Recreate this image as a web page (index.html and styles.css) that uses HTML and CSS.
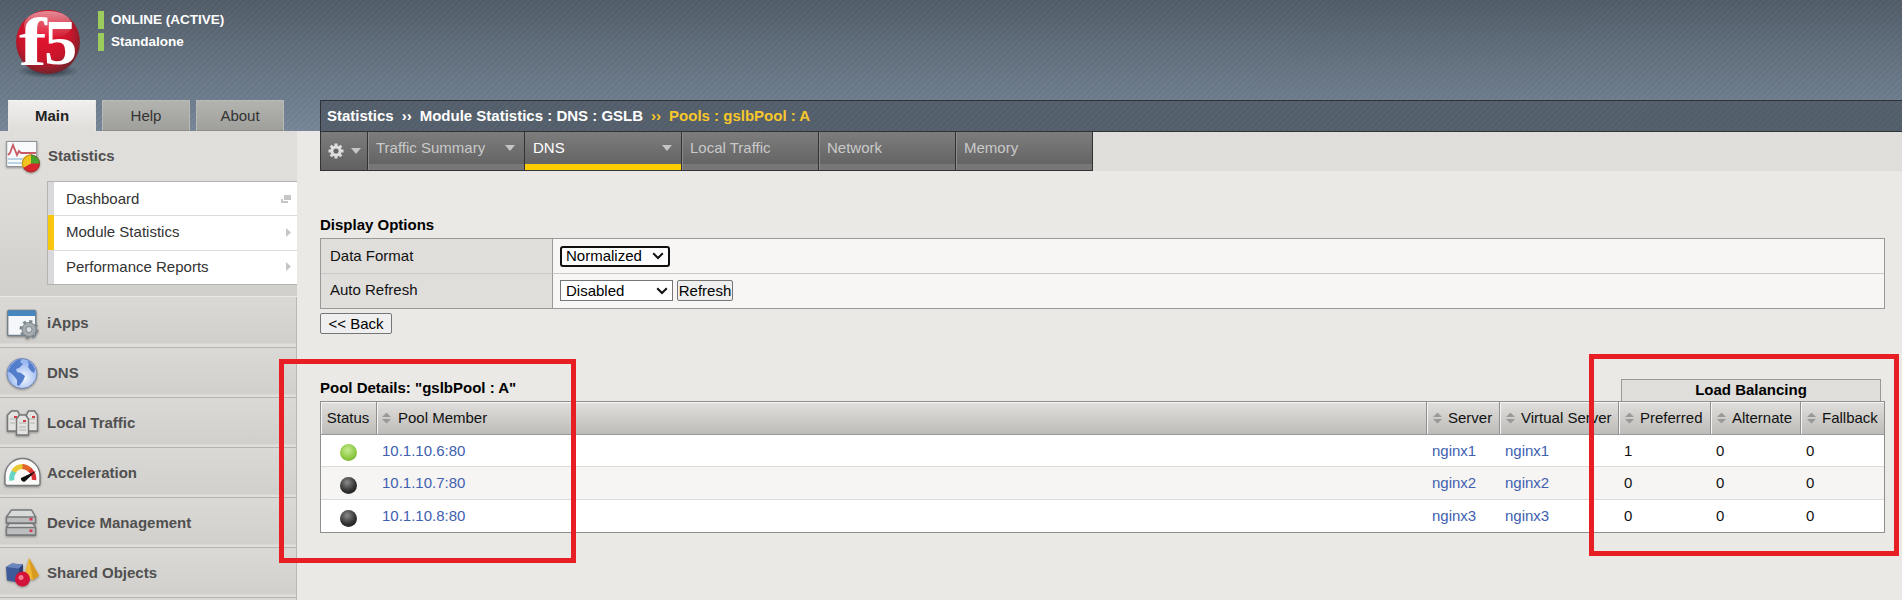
FILE: index.html
```html
<!DOCTYPE html>
<html lang="en">
<head>
<meta charset="utf-8">
<title>Module Statistics</title>
<link rel="stylesheet" href="styles.css">
</head>
<body>
<header class="banner">
  <div class="identity">
    <svg class="logo" width="72" height="72" viewBox="0 0 72 72">
      <defs>
        <radialGradient id="ball" cx=".45" cy=".38" r=".62"><stop offset="0" stop-color="#e8122f"/><stop offset=".65" stop-color="#c9152b"/><stop offset="1" stop-color="#74232b"/></radialGradient>
        <linearGradient id="gloss" x1="0" y1="0" x2="0" y2="1"><stop offset="0" stop-color="#fff" stop-opacity=".5"/><stop offset="1" stop-color="#fff" stop-opacity="0"/></linearGradient>
        <radialGradient id="shade"><stop offset="0" stop-color="#20262d" stop-opacity=".9"/><stop offset="1" stop-color="#20262d" stop-opacity="0"/></radialGradient>
      </defs>
      <ellipse cx="36" cy="61" rx="31" ry="7" fill="url(#shade)"/>
      <circle cx="36" cy="32" r="32" fill="url(#ball)"/>
      <ellipse cx="36" cy="15" rx="24" ry="14" fill="url(#gloss)"/>
      <text class="logo-text" transform="translate(7 55) scale(1.220 1)">f</text>
      <text class="logo-text" transform="translate(32 54) scale(.980 .940)">5</text>
    </svg>
    <div class="states">
      <div class="state">ONLINE (ACTIVE)</div>
      <div class="state">Standalone</div>
    </div>
  </div>
  <nav class="tabs">
    <div class="tab tab-on">Main</div>
    <div class="tab">Help</div>
    <div class="tab">About</div>
  </nav>
</header>
<div class="layout">
  <aside class="side">
    <section class="open">
      <div class="open-head">
        <svg class="ic" width="40" height="36" viewBox="0 0 40 36">
          <rect x="6.700" y="3.500" width="30" height="25" fill="#f8f9fa" stroke="#8e9296"/>
          <path d="M8 21h27M8 25h27" stroke="#b9d4e6" stroke-width="2"/>
          <path d="M8 17l2-2 3-8 4 10 2-4 2 2h15" fill="none" stroke="#c75b66" stroke-width="1.800"/>
          <circle cx="31" cy="25.500" r="9" fill="#d8262f"/>
          <path d="M31 25.500V16.500a9 9 0 0 0-8 13.500z" fill="#f3c41d"/>
          <path d="M31 25.500V16.500a9 9 0 0 1 9 9z" fill="#4aa32f"/>
          <circle cx="31" cy="25.500" r="8.500" fill="none" stroke="#5c3020" stroke-opacity=".35"/>
        </svg>
        <span>Statistics</span>
      </div>
      <ul class="sub">
        <li>Dashboard<svg width="10" height="8"><path d="M0 4h2v2h5v2H0zM3 0h7v5H3z" fill="#c6c6c6"/></svg></li>
        <li class="sub-on">Module Statistics<svg width="5" height="9"><path d="M0 0l5 4.500L0 9z" fill="#c6c6c6"/></svg></li>
        <li>Performance Reports<svg width="5" height="9"><path d="M0 0l5 4.500L0 9z" fill="#c6c6c6"/></svg></li>
      </ul>
    </section>
    <div class="item first">
      <svg class="ic" width="40" height="36" viewBox="0 0 40 36">
        <rect x="7.700" y="5.500" width="28" height="25" rx="1" fill="#f5f7fa" stroke="#747f8a" stroke-width="1.400"/>
        <rect x="8" y="5.500" width="27.500" height="5.500" fill="#4786bf"/>
        <circle cx="29" cy="24.500" r="8" fill="none" stroke="#7e888e" stroke-width="3" stroke-dasharray="3.100 3.180"/>
        <circle cx="29" cy="24.500" r="7" fill="#a4acb0" stroke="#7e888e"/>
        <circle cx="29" cy="24.500" r="3" fill="#d9dddd" stroke="#7e888e"/>
      </svg><span>iApps</span>
    </div>
    <div class="item">
      <svg class="ic" width="40" height="36" viewBox="0 0 40 36">
        <defs><radialGradient id="sea" cx=".55" cy=".65"><stop offset="0" stop-color="#f4f8ff"/><stop offset="1" stop-color="#9dbaf0"/></radialGradient></defs>
        <circle cx="22" cy="18.500" r="15" fill="url(#sea)" stroke="#7286b5"/>
        <path d="M8 16l3-6 6-5 5-1-2 3 3 2-4 4-3 1 1 3 4 1 4 3-2 5-4 5-2-1v-5l-3-4-3-3-2-1zM27 5l5 4 3 5-1 4-3-2-3-4 1-3z" fill="#537dcb"/>
      </svg><span>DNS</span>
    </div>
    <div class="item">
      <svg class="ic" width="40" height="36" viewBox="0 0 40 36">
        <g fill="#e3e3e1" stroke="#777" stroke-width="1.500">
          <path d="M7.500 26V10l4-4h6l2 4v16zM26.500 26V10l2-4h6l3 4v16z"/>
          <path d="M16.500 30V14l3-4h6l3 4v16z"/>
        </g>
        <path d="M10 14h6M10 18h5M29 14h6M30 18h5M19 18h7M19 22h7M19 25h7" stroke="#b1b1ad"/>
        <path d="M14 11h3v2h-3zM32 11h3v2h-3zM23 15h3v2h-3z" fill="#d63c45"/>
      </svg><span>Local Traffic</span>
    </div>
    <div class="item">
      <svg class="ic" width="40" height="36" viewBox="0 0 40 36">
        <path d="M5 29V21a17.500 17.500 0 0 1 35 0v8l-1.500 1.500h-32z" fill="#fbfbfa" stroke="#77797b" stroke-width="1.400"/>
        <path d="M12 25.500a11 11 0 0 1 3-10" fill="none" stroke="#68d4c3" stroke-width="5"/>
        <path d="M13.500 16.500a11 11 0 0 1 10-5" fill="none" stroke="#eac834" stroke-width="5"/>
        <path d="M22.500 11.500a12 12 0 0 1 8 4" fill="none" stroke="#e2662a" stroke-width="5"/>
        <path d="M30 15a12 12 0 0 1 4 10" fill="none" stroke="#d72f33" stroke-width="4.500"/>
        <path d="M36 16L25 26.500a3 3 0 0 1-4-3.500z" fill="#111"/>
      </svg><span>Acceleration</span>
    </div>
    <div class="item">
      <svg class="ic" width="40" height="36" viewBox="0 0 40 36">
        <g fill="#d9dada" stroke="#77787a" stroke-width="1.300">
          <path d="M6.500 12l5-7h20l4 7v6h-29z"/><path d="M6.500 22l3-3.500h23l3 3.500v8h-29z"/>
          <path d="M6.500 12h29v6h-29zM6.500 22.500h29V30h-29z" fill="#bcbdbe"/>
        </g>
        <path d="M29.500 13h3v2.500h-3zM29.500 24.500h3V27h-3z" fill="#dc3553"/>
      </svg><span>Device Management</span>
    </div>
    <div class="item">
      <svg class="ic" width="40" height="36" viewBox="0 0 40 36">
        <path d="M6 12l6-3.500 11 1v14l-4 4-12-2z" fill="#3e5a98"/><path d="M6 12l6-3.500 11 1-4 4z" fill="#6b86bf"/><path d="M19 13.500l4-4v14l-4 4z" fill="#2b4076"/>
        <path d="M29 3l10 17.500-6 4.500-9-3z" fill="#efb935"/><path d="M29 3l10 17.500-6 4.500z" fill="#d99a22"/>
        <circle cx="22.500" cy="24" r="7.500" fill="#d3123a"/><circle cx="21" cy="22.500" r="2.500" fill="#f17d8e"/>
      </svg><span>Shared Objects</span>
    </div>
  </aside>
  <main class="main">
    <div class="crumbs"><span>Statistics</span><span class="sep">››</span><span>Module Statistics : DNS : GSLB</span><span class="sep now">››</span><span class="now">Pools : gslbPool : A</span></div>
    <div class="menu">
      <div class="cell gear">
        <svg width="16" height="16" viewBox="0 0 16 16"><g stroke="#dedede" stroke-width="3"><path d="M8 .500v15M.500 8h15M2.700 2.700l10.600 10.600M13.300 2.700L2.700 13.300"/></g><circle cx="8" cy="8" r="5.500" fill="#dedede"/><circle cx="8" cy="8" r="2.600" fill="#666"/></svg>
        <svg width="10" height="6"><path d="M0 0h10L5 6z" fill="#c5c5c5"/></svg>
      </div>
      <div class="cell wide">Traffic Summary<svg width="10" height="6"><path d="M0 0h10L5 6z" fill="#c5c5c5"/></svg></div>
      <div class="cell wide cell-on">DNS<svg width="10" height="6"><path d="M0 0h10L5 6z" fill="#c5c5c5"/></svg></div>
      <div class="cell">Local Traffic</div>
      <div class="cell">Network</div>
      <div class="cell">Memory</div>
    </div>
    <div class="content">
      <h2 class="title">Display Options</h2>
      <div class="options">
        <div class="label">Data Format</div>
        <div class="value"><span class="select focus">Normalized<svg width="12" height="8" viewBox="0 0 12 8"><path d="M1.200 1.200L6 6l4.800-4.800" fill="none" stroke="#111" stroke-width="2"/></svg></span></div>
        <div class="label">Auto Refresh</div>
        <div class="value"><span class="select">Disabled<svg width="12" height="8" viewBox="0 0 12 8"><path d="M1.200 1.200L6 6l4.800-4.800" fill="none" stroke="#111" stroke-width="2"/></svg></span><button class="button">Refresh</button></div>
      </div>
      <button class="button back">&lt;&lt; Back</button>
      <div class="pool-head"><h2 class="title">Pool Details: "gslbPool : A"</h2><div class="group">Load Balancing</div></div>
      <div class="pool">
        <div class="row head">
          <div class="status">Status</div>
          <div class="member"><i class="sort"></i>Pool Member</div>
          <div><i class="sort"></i>Server</div>
          <div><i class="sort"></i>Virtual Server</div>
          <div><i class="sort"></i>Preferred</div>
          <div><i class="sort"></i>Alternate</div>
          <div><i class="sort"></i>Fallback</div>
        </div>
        <div class="row"><div class="status"><i class="dot green"></i></div><a>10.1.10.6:80</a><a>nginx1</a><a>nginx1</a><div>1</div><div>0</div><div>0</div></div>
        <div class="row alt"><div class="status"><i class="dot"></i></div><a>10.1.10.7:80</a><a>nginx2</a><a>nginx2</a><div>0</div><div>0</div><div>0</div></div>
        <div class="row"><div class="status"><i class="dot"></i></div><a>10.1.10.8:80</a><a>nginx3</a><a>nginx3</a><div>0</div><div>0</div><div>0</div></div>
      </div>
    </div>
  </main>
</div>
<div class="mark mark-left"></div>
<div class="mark mark-right"></div>
</body>
</html>
```
FILE: styles.css
```css
* { box-sizing: border-box; }
body { margin: 0; height: 600px; overflow: hidden; position: relative; background: #eae9e5; font: 15px/18px "Liberation Sans", Arial, sans-serif; color: #111; }
svg { display: block; flex: none; }

.banner { height: 131px; display: flex; flex-direction: column; justify-content: space-between; background: repeating-linear-gradient(135deg, rgba(255,255,255,.015) 0 2px, rgba(0,0,0,.025) 2px 4.240px), linear-gradient(#525d69, #647280 45%, #778799); }
.identity { display: flex; padding: 10px 0 0 12px; }
.logo { overflow: visible; }
.logo-text { font: bold 68px "Liberation Serif", serif; fill: #fff; }
.states { display: flex; flex-direction: column; gap: 4px; padding: 1px 0 0 14px; }
.state { height: 18px; border-left: 6px solid #9ccc5c; padding-left: 7px; font: bold 13.500px/17px "Liberation Sans", Arial, sans-serif; color: #fff; white-space: nowrap; }
.tabs { display: flex; gap: 6px; padding-left: 8px; }
.tab { width: 88px; height: 31px; border: 1px solid #b9b9b6; border-bottom-color: #8c8c89; background: linear-gradient(#b3b3af, #9f9f9b); text-align: center; line-height: 30px; color: #333; }
.tab-on { border-color: #f4f4f2 #e6e5e2 #dfdedb; background: linear-gradient(#f0efed, #dfdedb); font-weight: bold; color: #222; }

.layout { display: flex; height: 469px; }
.side { width: 297px; flex: none; border-right: 1px solid #b9b8b5; }
.open { height: 166px; margin-right: -1px; background: linear-gradient(#dfdedb 30%, #d0cfcb); border-bottom: 1px solid #eae9e6; }
.open-head { display: flex; gap: 8px; height: 50px; align-items: center; font-weight: bold; color: #505050; }
.ic { overflow: visible; filter: drop-shadow(0 1px 1px rgba(0,0,0,.35)); }
.sub { list-style: none; margin: 0 0 0 47px; padding: 0; border: solid #b3b3b0; border-width: 1px 0 1px 1px; background: #fff; }
.sub li { display: flex; align-items: center; justify-content: space-between; height: 34px; padding: 0 6px 1px 12px; border-left: 6px solid #d9d9dc; color: #333; }
.sub li:first-child { height: 33px; padding-bottom: 0; }
.sub li + li { box-shadow: inset 0 1px #dcdcda; }
.sub .sub-on { height: 35px; border-left-color: #f9c80e; }
.item { display: flex; gap: 7px; align-items: center; height: 50px; border-bottom: 1px solid #b5b4b1; background: linear-gradient(#dad9d6, #d1d0cc 46px, #dfdedb 47px); font-weight: bold; color: #505050; }
.first { height: 51px; padding-top: 1px; }
.item:last-child { box-shadow: 0 2px #dad9d6; }

.main { flex: 1; min-width: 0; padding-left: 23px; }
.crumbs { height: 32px; margin-top: -31px; border: 1px solid #2f3338; border-right: 0; display: flex; padding-left: 6px; line-height: 30px; font-weight: bold; color: #fff; background: repeating-linear-gradient(135deg, rgba(255,255,255,.015) 0 2px, rgba(0,0,0,.025) 2px 4.240px), #54606c; white-space: pre; }
.sep { margin: 0 8px; }
.now { color: #f8c72a; }
.menu { display: flex; height: 39px; background: #dfdedb; border-left: 1px solid #333; }
.cell { width: 137px; border-right: 1px solid #333; border-bottom: 1px solid #333; padding: 6px 9px 0 8px; color: #c9c9c9; background: linear-gradient(#7d7d7d, #646464 32px, #777 32px); box-shadow: inset 1px 0 #8b8b8b; line-height: 20px; height: 39px; }
.wide { width: 157px; display: flex; justify-content: space-between; }
.wide svg { margin-top: 7px; }
.cell-on { color: #fff; background: linear-gradient(#7d7d7d, #646464 32px, #fc0 32px); box-shadow: none; }
.gear { width: 47px; display: flex; gap: 7px; align-items: center; padding: 0 0 0 7px; background: linear-gradient(#7d7d7d, #606060); box-shadow: none; }

.content { padding: 45px 17px 0 0; }
.title { margin: 0; font-size: 15px; line-height: 18px; color: #000; }
.options { margin-top: 4px; height: 71px; display: grid; grid-template-columns: 232px 1fr; grid-template-rows: 35px 34px; border: 1px solid #999; }
.label { background: #dfdedb; border-right: 1px solid #999; padding-left: 9px; line-height: 33px; }
.label:nth-child(3) { line-height: 32px; }
.value { display: flex; gap: 4px; align-items: center; background: #f7f6f4; padding-left: 7px; }
.label:first-child, .value:nth-child(2) { border-bottom: 1px solid #c9c9c7; }
.value:nth-child(4) { padding-bottom: 1px; }
.select { display: flex; align-items: center; justify-content: space-between; width: 113px; height: 21px; padding: 0 4px 0 5px; border: 1px solid #767676; background: #fff; color: #000; }
.focus { width: 110px; border: 2px solid #101010; border-radius: 3px; padding-left: 4px; }
.button { display: block; height: 21px; width: 56px; padding: 0; border: 1px solid #767676; border-radius: 2px; background: #efefef; font: 15px/18px "Liberation Sans", Arial, sans-serif; color: #000; white-space: nowrap; }
.back { width: 72px; margin-top: 4px; }

.pool-head { display: flex; justify-content: space-between; align-items: flex-end; height: 22px; margin-top: 45px; padding-right: 4px; }
.pool-head .title { padding-bottom: 4px; line-height: 18px; }
.group { width: 260px; height: 22px; border: 1px solid #999; border-bottom: 0; background: #dfdedb; text-align: center; font-weight: bold; line-height: 20px; color: #000; }
.pool { border: 1px solid #8f8f8f; background: #fff; }
.row { display: grid; grid-template-columns: 56px 1050px 73px 119px 92px 90px 1fr; height: 33px; border-bottom: 1px solid #dcdcda; line-height: 32px; }
.row > * { padding-left: 5px; }
.row:last-child { height: 32px; border-bottom: 0; }
.row:nth-child(2) { height: 32px; line-height: 31px; }
.alt { background: #f6f5f4; }
.row a { color: #4060b0; }
.head { border-color: #999; background: linear-gradient(#e0dfdc, #bdbcb8); color: #111; }
.head > div { display: flex; align-items: center; border-right: 1px solid #8f8f8f; box-shadow: inset 1px 1px #f5f5f4; padding-left: 6px; white-space: nowrap; }
.head > .member { padding-left: 5px; }
.head > div:last-child { border-right: 0; }
.row .status { display: flex; align-items: center; justify-content: center; padding: 0 1px 0 0; }
.sort { width: 9px; height: 11px; margin-right: 6px; background: #999; clip-path: polygon(50% 0, 100% 42%, 0 42%, 0 58%, 100% 58%, 50% 100%, 0 58%, 0 42%); }
.member .sort { margin-right: 7px; }
.dot { width: 17px; height: 17px; margin-top: 4px; border-radius: 50%; background: radial-gradient(circle at 42% 32%, #8a8a8a, #333 55%, #111); }
.green { background: radial-gradient(circle at 45% 35%, #c5eb92, #8cc63f 60%, #659b31); }

.mark { position: absolute; border: 5px solid #e81e25; }
.mark-left { left: 279px; top: 359px; width: 297px; height: 204px; }
.mark-right { left: 1589px; top: 354px; width: 310px; height: 202px; }
```
